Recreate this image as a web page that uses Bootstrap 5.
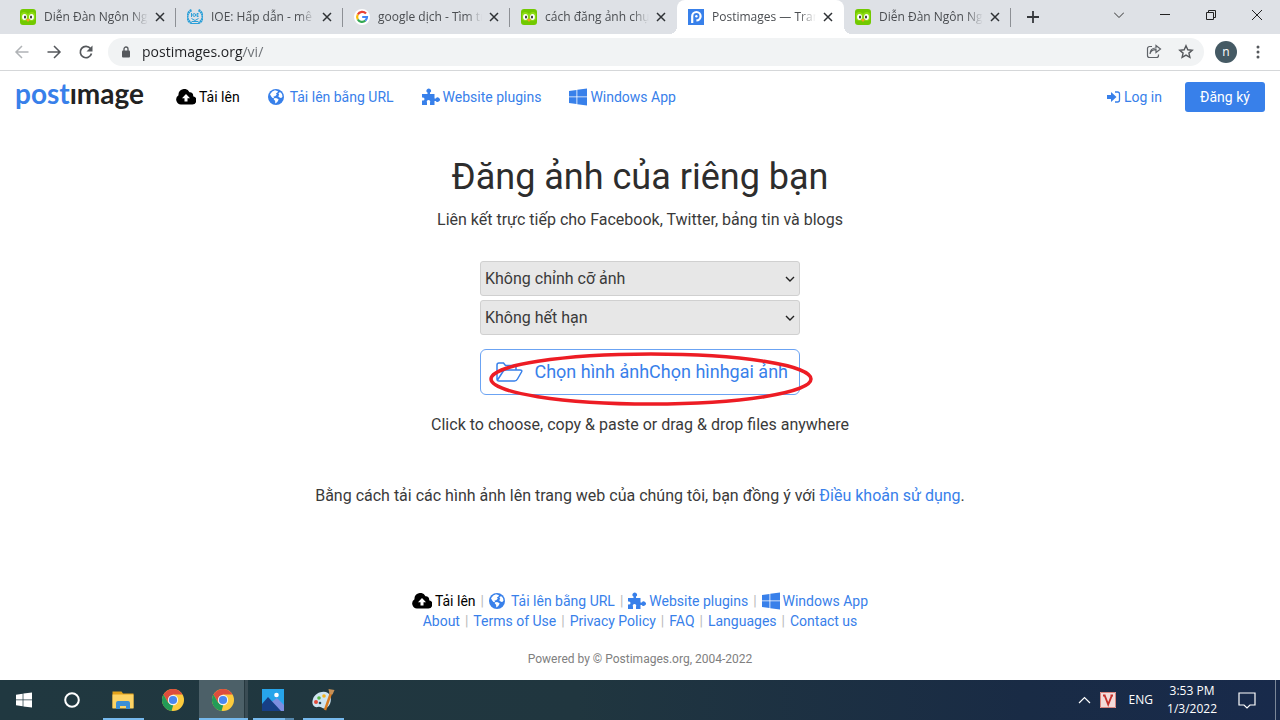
<!DOCTYPE html>
<html lang="vi">
<head>
<meta charset="utf-8">
<meta name="viewport" content="width=device-width, initial-scale=1">
<title>Postimages — Trang chủ</title>
<link href="https://cdn.jsdelivr.net/npm/bootstrap@5.3.0/dist/css/bootstrap.min.css" rel="stylesheet">
<script src="https://cdn.jsdelivr.net/npm/bootstrap@5.3.0/dist/js/bootstrap.bundle.min.js" defer></script>
<style>
:root{--blue:#3880ea;--ink:#3a3a3a}
body{font-family:Roboto,"Liberation Sans",sans-serif;color:var(--ink);font-size:14px;line-height:20px;background:#fff}
button{font-family:inherit}
a{color:var(--blue);text-decoration:none}
svg{display:block;flex:none}
p{margin:0}
.chrome-ui,.taskbar{font-family:"Open Sans","Noto Sans",sans-serif}
.plain{background:none;border:0;padding:0;color:inherit}
/* browser window */
.tabstrip{background:#dee1e6;height:34px;padding-left:9px}
.tab-item{flex:0 1 167px;min-width:0;height:34px;padding:0 11px;font-size:12px;color:#4a4d51;position:relative}
.tab-label{flex:1;min-width:0;overflow:hidden;white-space:nowrap;margin:0 7px 0 8px;-webkit-mask-image:linear-gradient(90deg,#000 84%,transparent);mask-image:linear-gradient(90deg,#000 84%,transparent)}
.tab-item.sep::after{content:"";position:absolute;right:0;top:8px;width:1px;height:19px;background:#8d9095}
.tab-item.current{background:#fff;border-radius:8px 8px 0 0}
.tab-item.current::before,.tab-item.current::after{content:"";position:absolute;bottom:0;width:8px;height:8px}
.tab-item.current::before{left:-8px;background:radial-gradient(circle at 0 0,#0000 8px,#fff 8px)}
.tab-item.current::after{right:-8px;background:radial-gradient(circle at 100% 0,#0000 8px,#fff 8px)}
.new-tab{padding:0 16px}
.win-btn{width:46px;height:29px}
.toolbar{height:37px;border-bottom:1px solid #d5d7d9;padding:0 16px 0 14px}
.omnibox{background:#f1f3f4;border-radius:14px;height:28px;padding:0 10px 0 12px;margin:0 11px 0 14px}
.address{border:0;outline:0;padding:0;margin-left:10px;min-width:0;height:20px;font-size:14px;color:transparent;background:linear-gradient(90deg,#202124 101px,#6a6e73 101px);-webkit-background-clip:text;background-clip:text}
.avatar{width:22px;height:22px;background:#455a64;color:#fff;font-size:12px;line-height:20px;margin-right:15px}
/* site */
.site-nav{padding:2px 15px 0;height:50px}
.brand{font:700 28px/30px Lato,sans-serif;font-variant-ligatures:none;color:#222;margin-right:32px;padding-bottom:9px}
.brand span{color:var(--blue)}
.main-nav{gap:28px}
.main-nav a,.foot a,.login{display:inline-flex;align-items:center;gap:3px}
.globe{margin-right:3px}
.main-nav .here,.foot .here{color:#000}
.login{margin-right:23px}
.signup{background:var(--blue);color:#fff;border:0;border-radius:3px;width:80px;height:30px;font-size:14px}
.site-main{padding-top:34px}
h1{font-size:36px;line-height:44px;font-weight:400;color:#2d2d2d;margin:0 0 9px}
.fs-mid{font-size:16px;line-height:24px}
.upload-form{width:320px;max-width:100%;margin:29px auto 18px}
.pick{display:block;height:35px;width:100%;border:1px solid #d0d0d0;border-radius:3px;font-size:16px;color:var(--ink);padding:1px 4px 0;margin-bottom:4px;appearance:none;background:#e7e7e7 url("data:image/svg+xml,%3Csvg xmlns='http://www.w3.org/2000/svg' width='10' height='6' fill='none' stroke='%23222' stroke-width='1.4'%3E%3Cpath d='M1 1l4 4 4-4'/%3E%3C/svg%3E") no-repeat right 4px center}
.choose-wrap{margin-top:14px}
.choose{width:100%;height:46px;border:1px solid #6ba3f3;border-radius:6px;background:#fff;color:var(--blue);font-size:18px;padding:0 11px 0 15px;white-space:nowrap}
.ring{position:absolute;left:8px;top:2px;pointer-events:none}
.terms{margin-top:47px}
.foot{padding-bottom:11px}
.foot-row{gap:0 5px}
.bar{color:#bbb}
.powered{font-size:12px;color:#808080;margin-top:18px}
/* desktop */
.taskbar{height:40px;background:linear-gradient(90deg,#203840,#20363f 45%,#192b45 80%,#182a4b);color:#fff;font-size:12px;padding-right:4px}
.taskbar button{height:40px;display:flex;align-items:center;justify-content:center}
.start{width:48px}
.tasks{margin-left:2px}
.task{width:50px;position:relative}
.task.open::after{content:"";position:absolute;left:5px;right:4px;bottom:0;height:2px;background:#76b9ed}
.taskbar .active{background:linear-gradient(90deg,#0000 1px,#4c6068 1px,#4c6068 46px,#26383f 46px,#26383f 47px,#3a4c54 47px)}
.task.active::after{left:1px;right:0}
.task.stack::after{background:linear-gradient(90deg,#76b9ed 32px,#5588ad 32px)}
.tray{gap:9px}
.clock{line-height:18px;margin:0 5px}
.notice{width:32px;margin-right:3px}
.peek{width:1px;background:#7b8798}
</style>
</head>
<body class="min-vh-100 d-flex flex-column">
<svg width="0" height="0" class="position-absolute" aria-hidden="true">
<symbol id="owl" viewBox="0 0 16 16"><rect width="16" height="16" rx="3" fill="#72c900"/><path d="M1 5c2-3 5-2 7 0 2-2 5-3 7 0v5c-2 3-5 2-7 1-2 1-5 2-7-1z" fill="#8edb12"/><ellipse cx="4.500" cy="8" rx="2.400" ry="3" fill="#fff"/><ellipse cx="11.500" cy="8" rx="2.400" ry="3" fill="#fff"/><ellipse cx="5" cy="8" rx="1" ry="1.500" fill="#333"/><ellipse cx="11" cy="8" rx="1" ry="1.500" fill="#333"/><path d="M6 10.500q2-1.500 4 0L8 13z" fill="#f8a020"/></symbol>
<symbol id="x" viewBox="0 0 10 10"><path d="M1 1l8 8m0-8l-8 8" stroke="#2e3135" stroke-width="1.500"/></symbol>
<symbol id="cloud" viewBox="0 0 20 16"><path d="M5 15.500A5 5 0 0 1 2.500 6.300 5.800 5.800 0 0 1 13.500 3.300a3.200 3.200 0 0 1 3.600 3.900A4.200 4.200 0 0 1 16 15.500z"/><path d="M10 5l4 4.200h-2.500V12.500h-3V9.200H6z" fill="#fff"/></symbol>
<symbol id="globe" viewBox="0 0 16 16"><circle cx="8" cy="8" r="8" fill="#3880ea"/><path d="M7 1.300L4.300 2.500 2 5.200l1.200 2.300 1.300 1.500 1.600.300L5.500 7.500l1.700-.3 1.600-1.800-.9-1 1.500-.8.6-1.300zM6.500 9l-.8 1.500 1.400 1.300.2 2.700 2-1.500 1.400-2.500-1.800-1.300zM12 3l-1.600 1.500.8 1.300-1 1.500 1.700 1.500 1.300.2 1.300-1.300-.5-2.700z" fill="#fff"/></symbol>
<symbol id="plug" viewBox="0 0 18 18"><path d="M0 6h5.500V4.600A2.200 2.200 0 1 1 8 4.600V6h4.500v4.500h1.300a2.200 2.200 0 1 1 0 2.400H12.500V17H8v-2.500a1.700 1.700 0 1 0-3 0V17H0v-4.500h1a1.500 1.500 0 0 0 0-3H0z" fill="#3880ea"/></symbol>
<symbol id="win" viewBox="0 0 18 18"><path d="M0 3l7.500-1v6.500H0zM8.300 1.800L18 .500v8H8.300zM0 9.300h7.500V16L0 15zM8.300 9.300H18v8.200l-9.700-1.300z"/></symbol>
<symbol id="chr" viewBox="0 0 22 22"><circle cx="11" cy="11" r="11" fill="#fccb3d"/><path d="M1.500 5.500A11 11 0 0 1 20.500 5.500H11L6.200 13.700z" fill="#de4d3d"/><path d="M1.500 5.500L6.200 13.700l5 2.500L9.500 22A11 11 0 0 1 1.500 5.500z" fill="#239b57"/><circle cx="11" cy="11" r="5.200" fill="#f4f4f4"/><circle cx="11" cy="11" r="4.100" fill="#4a87ef"/></symbol>
</svg>
<header class="chrome-ui">
<div class="tabstrip d-flex">
<div class="tab-item sep d-flex align-items-center"><svg width="16" height="16"><use href="#owl"/></svg><span class="tab-label">Diễn Đàn Ngôn Ngữ</span><button class="plain" aria-label="Đóng"><svg width="10" height="10"><use href="#x"/></svg></button></div>
<div class="tab-item sep d-flex align-items-center"><svg width="16" height="16" viewBox="0 0 16 16" fill="none" stroke="#2b9fd8"><path d="M4.500 1.200a7 7 0 0 0 0 12.800M11.500 1.200a7 7 0 0 1 0 12.800" stroke-width="2.400" stroke-dasharray="2 .400"/><path d="M4.500 4v4M11.500 4.500H10v3h1.500M10 6h1.500M4 14.500h8M4.500 9.500l3.500 2 3.500-2M5 12.500h6"/><circle cx="7.200" cy="6" r="1.400"/></svg><span class="tab-label">IOE: Hấp dẫn - mê say</span><button class="plain" aria-label="Đóng"><svg width="10" height="10"><use href="#x"/></svg></button></div>
<div class="tab-item sep d-flex align-items-center"><svg width="16" height="16" viewBox="0 0 16 16"><circle cx="8" cy="8" r="8" fill="#fff"/><g fill="none" stroke-width="2.200"><path d="M12 4.500A5 5 0 0 0 3.800 5.500" stroke="#ea4335"/><path d="M3.800 5.500a5 5 0 0 0 0 5" stroke="#fbbc05"/><path d="M3.800 10.500a5 5 0 0 0 7.500 1.200" stroke="#34a853"/><path d="M11.300 11.700A5 5 0 0 0 13 8H8.200" stroke="#4285f4"/></g></svg><span class="tab-label">google dịch - Tìm trên</span><button class="plain" aria-label="Đóng"><svg width="10" height="10"><use href="#x"/></svg></button></div>
<div class="tab-item d-flex align-items-center"><svg width="16" height="16"><use href="#owl"/></svg><span class="tab-label">cách đăng ảnh chụp</span><button class="plain" aria-label="Đóng"><svg width="10" height="10"><use href="#x"/></svg></button></div>
<div class="tab-item current d-flex align-items-center"><svg width="16" height="16" viewBox="0 0 16 16"><path fill="#3880ea" d="M0 0h16v16H0z"/><path d="M4.200 14V7.200A4.200 4.200 0 1 1 8.400 11.400" fill="none" stroke="#fff" stroke-width="2.200"/><circle cx="8.400" cy="7.200" r="1.200" fill="#fff"/></svg><span class="tab-label">Postimages — Trang</span><button class="plain" aria-label="Đóng"><svg width="10" height="10"><use href="#x"/></svg></button></div>
<div class="tab-item sep d-flex align-items-center"><svg width="16" height="16"><use href="#owl"/></svg><span class="tab-label">Diễn Đàn Ngôn Ngữ</span><button class="plain" aria-label="Đóng"><svg width="10" height="10"><use href="#x"/></svg></button></div>
<button class="plain new-tab" aria-label="Thẻ mới"><svg width="12" height="12" viewBox="0 0 12 12"><path d="M6 0v12M0 6h12" stroke="#35383c" stroke-width="1.800"/></svg></button>
<div class="ms-auto d-flex">
<button class="plain win-btn d-flex align-items-center justify-content-center" aria-label="Tìm thẻ"><svg width="10" height="6" viewBox="0 0 10 6"><path d="M0 .500l5 5 5-5" fill="none" stroke="#333"/></svg></button>
<button class="plain win-btn d-flex align-items-center justify-content-center" aria-label="Thu nhỏ"><svg width="10" height="10" viewBox="0 0 10 10"><path d="M0 4.500h10" stroke="#222"/></svg></button>
<button class="plain win-btn d-flex align-items-center justify-content-center" aria-label="Khôi phục"><svg width="10" height="10" viewBox="0 0 10 10"><path d="M.500 2.500h7v7h-7zM2.500 2V.500h7v7H8" fill="none" stroke="#222"/></svg></button>
<button class="plain win-btn d-flex align-items-center justify-content-center" aria-label="Đóng cửa sổ"><svg width="10" height="10" viewBox="0 0 10 10"><path d="M0 0l10 10M10 0L0 10" stroke="#222"/></svg></button>
</div>
</div>
<div class="toolbar d-flex align-items-center">
<button class="plain" aria-label="Quay lại"><svg width="16" height="16" viewBox="0 0 16 16" fill="none" stroke="#b0b3b6" stroke-width="1.500"><path d="M14.500 8H2.500M8 2L2 8l6 6"/></svg></button>
<button class="plain ms-3" aria-label="Tiến"><svg width="16" height="16" viewBox="0 0 16 16" fill="none" stroke="#55585c" stroke-width="1.500"><path d="M1.500 8h12M8 2l6 6-6 6"/></svg></button>
<button class="plain ms-3" aria-label="Tải lại"><svg width="16" height="16" viewBox="0 0 16 16"><path d="M13.500 9.500A5.700 5.700 0 1 1 12.500 4.500" fill="none" stroke="#55585c" stroke-width="1.700"/><path d="M14.500 1.500v6h-6z" fill="#55585c"/></svg></button>
<div class="omnibox d-flex align-items-center flex-grow-1">
<svg width="12" height="14" viewBox="0 0 12 14"><rect x="2" y="5.500" width="8" height="7" rx="1" fill="#55585c"/><path d="M4 6V4a2 2 0 0 1 4 0v2" fill="none" stroke="#55585c" stroke-width="1.300"/></svg>
<input class="address flex-grow-1" type="text" value="postimages.org/vi/" aria-label="Thanh địa chỉ">
<button class="plain me-3" aria-label="Chia sẻ"><svg width="16" height="16" viewBox="0 0 16 16" fill="none" stroke="#5f6368" stroke-width="1.200"><path d="M6 2.500H3.500a2 2 0 0 0-2 2v7a2 2 0 0 0 2 2h7a2 2 0 0 0 2-2v-1M4 10c.500-3 2.500-4.300 6-4.300V8.500L14.500 5 10 1.500V4C6 4 4 6.500 4 10z"/></svg></button>
<button class="plain" aria-label="Dấu trang"><svg width="16" height="16" viewBox="0 0 16 16"><path d="M8 1.800l1.800 4 4.400.400-3.300 2.900 1 4.300L8 11.100l-3.900 2.300 1-4.300L1.800 6.200l4.400-.400z" fill="none" stroke="#55585c" stroke-width="1.400"/></svg></button>
</div>
<button class="plain avatar rounded-circle text-center" aria-label="Tài khoản">n</button>
<button class="plain" aria-label="Trình đơn"><svg width="12" height="16" viewBox="0 0 12 16" fill="#55585c"><circle cx="6" cy="3" r="1.500"/><circle cx="6" cy="8" r="1.500"/><circle cx="6" cy="13" r="1.500"/></svg></button>
</div>
</header>
<nav class="site-nav d-flex align-items-center">
<a class="brand" href="#"><span>post</span>ımage</a>
<div class="main-nav d-flex">
<a class="here" href="#"><svg width="20" height="16"><use href="#cloud"/></svg>Tải lên</a>
<a href="#"><svg width="16" height="16" class="globe"><use href="#globe"/></svg>Tải lên bằng URL</a>
<a href="#"><svg width="18" height="18"><use href="#plug"/></svg>Website plugins</a>
<a href="#"><svg width="18" height="18" fill="#3880ea"><use href="#win"/></svg>Windows App</a>
</div>
<a class="login ms-auto" href="#"><svg width="14" height="14" viewBox="0 0 14 14"><path d="M0 5h4V2l5.500 5L4 12V9H0z" fill="#3880ea"/><path d="M8 2h2.500a2 2 0 0 1 2 2v6a2 2 0 0 1-2 2H8" fill="none" stroke="#3880ea" stroke-width="1.300"/></svg>Log in</a>
<button class="signup">Đăng ký</button>
</nav>
<main class="site-main text-center flex-grow-1">
<h1>Đăng ảnh của riêng bạn</h1>
<p class="fs-mid">Liên kết trực tiếp cho Facebook, Twitter, bảng tin và blogs</p>
<form class="upload-form">
<select class="pick" aria-label="Kích thước"><option>Không chỉnh cỡ ảnh</option></select>
<select class="pick" aria-label="Hết hạn"><option>Không hết hạn</option></select>
<div class="choose-wrap position-relative">
<button type="button" class="choose d-flex align-items-center justify-content-between"><svg width="27" height="20" viewBox="0 0 27 20"><path d="M1 17V3a2 2 0 0 1 2-2h4.500l2 2.500H18a2 2 0 0 1 2 2V8M1.500 18L7 9.500Q8 8 10 8h14q2.500 0 1.500 2l-4 7q-1 2-3 2H3q-2 0-2-2" fill="none" stroke="#3880ea" stroke-width="1.500"/></svg><span>Chọn hình ảnhChọn hìnhgai ảnh</span></button>
<svg class="ring" width="328" height="58" viewBox="0 0 328 58" aria-hidden="true"><ellipse cx="163" cy="28" rx="160" ry="25" fill="none" stroke="#ed1c24" stroke-width="3.500"/></svg>
</div>
</form>
<p class="fs-mid">Click to choose, copy &amp; paste or drag &amp; drop files anywhere</p>
<p class="fs-mid terms">Bằng cách tải các hình ảnh lên trang web của chúng tôi, bạn đồng ý với <a href="#">Điều khoản sử dụng</a>.</p>
</main>
<footer class="foot text-center">
<div class="foot-row d-flex justify-content-center align-items-center flex-wrap">
<a class="here" href="#"><svg width="20" height="16"><use href="#cloud"/></svg>Tải lên</a><span class="bar">|</span>
<a href="#"><svg width="16" height="16" class="globe"><use href="#globe"/></svg>Tải lên bằng URL</a><span class="bar">|</span>
<a href="#"><svg width="18" height="18"><use href="#plug"/></svg>Website plugins</a><span class="bar">|</span>
<a href="#"><svg width="18" height="18" fill="#3880ea"><use href="#win"/></svg>Windows App</a>
</div>
<div class="foot-row d-flex justify-content-center flex-wrap">
<a href="#">About</a><span class="bar">|</span><a href="#">Terms of Use</a><span class="bar">|</span><a href="#">Privacy Policy</a><span class="bar">|</span><a href="#">FAQ</a><span class="bar">|</span><a href="#">Languages</a><span class="bar">|</span><a href="#">Contact us</a>
</div>
<p class="powered">Powered by © Postimages.org, 2004-2022</p>
</footer>
<div class="taskbar d-flex justify-content-between">
<div class="d-flex">
<button class="plain start" aria-label="Start"><svg width="16" height="16" viewBox="0 0 18 18" fill="#fff"><use href="#win"/></svg></button>
<button class="plain start" aria-label="Cortana"><svg width="16" height="16" viewBox="0 0 16 16"><circle cx="8" cy="8" r="6.800" fill="none" stroke="#fff" stroke-width="2"/></svg></button>
<div class="tasks d-flex">
<button class="plain task open" aria-label="File Explorer"><svg width="22" height="20" viewBox="0 0 22 20"><path d="M.500 1.500h9l1.500 2h10.500V18H.500z" fill="#e3a21a"/><path d="M.500 4.500H21.500V18.500H.500z" fill="#fdd365"/><path d="M4 19v-6a2 2 0 0 1 2-2h10a2 2 0 0 1 2 2v6h-4v-3H8v3z" fill="#3b8fd6"/></svg></button>
<button class="plain task" aria-label="Chrome"><svg width="22" height="22"><use href="#chr"/></svg></button>
<button class="plain task open active" aria-label="Chrome đang mở"><svg width="22" height="22"><use href="#chr"/></svg></button>
<button class="plain task open stack" aria-label="Photos"><svg width="22" height="22" viewBox="0 0 22 22"><path d="M0 0h22v22H0z" fill="#27a5ea"/><path d="M8 14l7-5 7 7v6H8z" fill="#7d8ee0"/><path d="M0 15l6-7 13 14H0z" fill="#173f86"/><circle cx="14.500" cy="6" r="2.300" fill="#fff"/></svg></button>
<button class="plain task open" aria-label="Paint"><svg width="24" height="24" viewBox="0 0 24 24"><path d="M2 11c2-6 10-9 15-6 5 4 3 13-2 15-3 2-5-2-8-1-4 1-7-3-5-8z" fill="#cfe4f1"/><circle cx="5" cy="14" r="2" fill="#e34b3b"/><circle cx="8" cy="10" r="1.800" fill="#58b947"/><circle cx="13" cy="8" r="1.800" fill="#f5b21b"/><circle cx="9" cy="15" r="1.300" fill="#24455a"/><path d="M20 5L14 22" stroke="#d97b20" stroke-width="2.500"/><path d="M17.500 1l6 1-2 4.500-3-.5z" fill="#c79055"/></svg></button>
</div>
</div>
<div class="tray d-flex align-items-center">
<button class="plain" aria-label="Biểu tượng ẩn"><svg width="13" height="8" viewBox="0 0 13 8"><path d="M1 7l5.500-5.500L12 7" fill="none" stroke="#fff" stroke-width="1.200"/></svg></button>
<svg width="16" height="16" viewBox="0 0 16 16"><path d="M0 0h16v16H0z" fill="#f3dcda"/><path d="M.500.500h15v15H.500z" fill="none" stroke="#d9847e"/><path d="M3 3.500h2.500M10.500 3.500H13M4.500 3l3.700 9.500L12 3" fill="none" stroke="#c4302b" stroke-width="1.900"/></svg>
<span class="ms-1">ENG</span>
<div class="clock text-center">3:53 PM<br>1/3/2022</div>
<button class="plain notice" aria-label="Thông báo"><svg width="18" height="18" viewBox="0 0 18 18"><path d="M1 2h16v12h-5l-3 3-3-3H1z" fill="none" stroke="#fff" stroke-width="1.200"/></svg></button>
<div class="peek align-self-stretch"></div>
</div>
</div>
</body>
</html>
